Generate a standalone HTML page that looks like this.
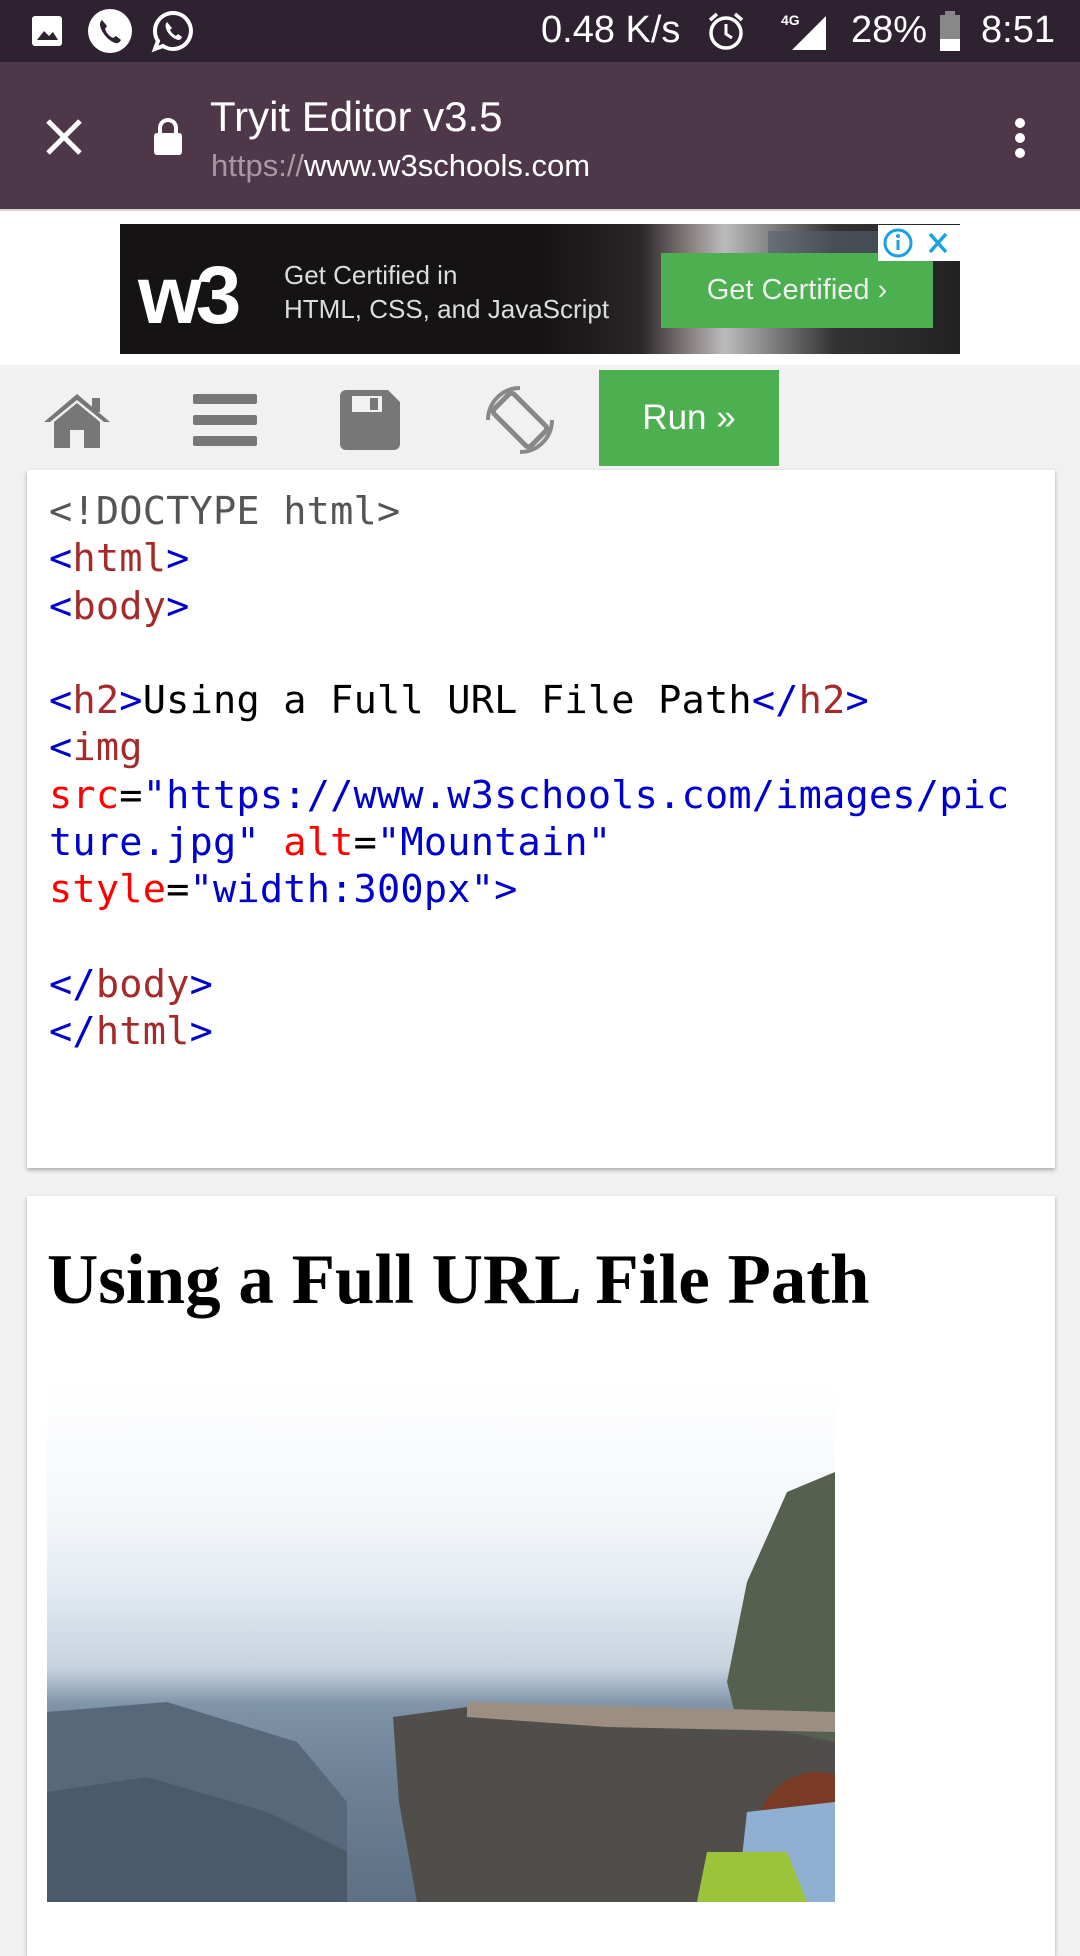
<!DOCTYPE html>
<html><head><meta charset="utf-8"><style>
*{margin:0;padding:0;box-sizing:border-box}
body{width:1080px;height:1920px;overflow:hidden;background:#f1f1f1;font-family:"Liberation Sans",sans-serif;position:relative}
.abs{position:absolute}
#sb{left:0;top:0;width:1080px;height:62px;background:#2e2230;color:#fff}
#hd{left:0;top:62px;width:1080px;height:147px;background:#4d3749;color:#fff}
#ad{left:0;top:211px;width:1080px;height:154px;background:#fff}
#code{left:27px;top:470px;width:1028px;height:698px;background:#fff;box-shadow:0 2px 4px rgba(0,0,0,.3)}
#code pre{position:absolute;left:22px;top:18px;font-family:"DejaVu Sans Mono","Liberation Mono",monospace;font-size:38.6px;line-height:47.3px;color:#000;letter-spacing:0.2px}
.b{color:#0000cd}.t{color:#a52a2a}.a{color:#f00}.d{color:#555}
#res{left:27px;top:1196px;width:1028px;height:760px;background:#fff;box-shadow:0 2px 4px rgba(0,0,0,.3);overflow:hidden}
</style></head><body>
<div id="sb" class="abs">
 <svg class="abs" style="left:30px;top:14px" width="34" height="34" viewBox="0 0 34 34"><rect x="2" y="2" width="30" height="30" rx="3" fill="#fff"/><path d="M7 26 L14 17 L19 22 L23 18 L28 26Z" fill="#2e2230"/></svg>
 <svg class="abs" style="left:87px;top:8px" width="46" height="46" viewBox="0 0 46 46"><circle cx="23" cy="23" r="22" fill="#fff"/><path d="M15 12 q-4 3 0 11 q5 9 13 12 q4 1 6-3 l-5-4 -3 2 q-6-3 -8-9 l2-3z" fill="#2e2230"/></svg>
 <svg class="abs" style="left:151px;top:9px" width="44" height="44" viewBox="0 0 44 44"><path d="M22 4 a18 18 0 1 1 -10 33 l-8 3 3-8 A18 18 0 0 1 22 4z" fill="none" stroke="#fff" stroke-width="4"/><path d="M16 13 q-3 3 0 9 q4 7 11 9 q3 0 4-3 l-4-3 -2 2 q-4-2 -6-6 l2-2z" fill="#fff"/></svg>
 <div class="abs" style="left:541px;top:9px;font-size:38px">0.48 K/s</div>
 <svg class="abs" style="left:706px;top:10px" width="40" height="42" viewBox="0 0 40 42"><circle cx="20" cy="23" r="15" fill="none" stroke="#fff" stroke-width="3.5"/><path d="M20 14v10l6 4" stroke="#fff" stroke-width="3" fill="none"/><path d="M4 10l7-6M36 10l-7-6" stroke="#fff" stroke-width="3.5"/></svg>
 <div class="abs" style="left:781px;top:12px;font-size:14px;font-weight:bold">4G</div>
 <svg class="abs" style="left:790px;top:12px" width="40" height="40"><path d="M2 38 L36 4 V38Z" fill="#fff"/></svg>
 <div class="abs" style="left:851px;top:9px;font-size:38px">28%</div>
 <svg class="abs" style="left:938px;top:11px" width="24" height="40"><rect x="7" y="0" width="10" height="4" fill="#888"/><rect x="2" y="4" width="20" height="36" fill="#888"/><rect x="2" y="28" width="20" height="12" fill="#fff"/></svg>
 <div class="abs" style="left:981px;top:9px;font-size:38px">8:51</div>
</div>
<div id="hd" class="abs">
 <svg class="abs" style="left:44px;top:55px" width="40" height="40"><path d="M4 4L36 36M36 4L4 36" stroke="#fff" stroke-width="5"/></svg>
 <svg class="abs" style="left:152px;top:54px" width="32" height="42"><path d="M8 18v-6a8 8 0 0 1 16 0v6" stroke="#fff" stroke-width="4" fill="none"/><rect x="2" y="17" width="28" height="22" rx="3" fill="#fff"/></svg>
 <div class="abs" style="left:210px;top:31px;font-size:42px">Tryit Editor v3.5</div>
 <div class="abs" style="left:211px;top:86px;font-size:31px"><span style="color:#a898a4">https://</span>www.w3schools.com</div>
 <svg class="abs" style="left:1009px;top:54px" width="22" height="44"><circle cx="11" cy="7" r="5" fill="#fff"/><circle cx="11" cy="22" r="5" fill="#fff"/><circle cx="11" cy="37" r="5" fill="#fff"/></svg>
</div>
<div class="abs" style="left:0;top:209px;width:1080px;height:2px;background:#d8d8d8"></div>
<div id="ad" class="abs">
 <div class="abs" style="left:120px;top:13px;width:840px;height:130px;background:linear-gradient(90deg,#151313 0%,#151313 50%,#2a2628 62%,#8a8282 68%,#bbb 72%,#333 85%,#222 100%)"></div>
 <div class="abs" style="left:768px;top:20px;width:180px;height:30px;background:#556070;opacity:.6"></div>
 <div class="abs" style="left:138px;top:38px;font-size:82px;font-weight:bold;color:#fff;font-family:'Liberation Sans',sans-serif;letter-spacing:-6px">w3</div>
 <div class="abs" style="left:284px;top:47px;font-size:26px;color:#ddd;line-height:34px">Get Certified in<br>HTML, CSS, and JavaScript</div>
 <div class="abs" style="left:661px;top:42px;width:272px;height:75px;background:#4caf50;color:#eee;font-size:29px;line-height:75px;text-align:center">Get Certified ›</div>
 <div class="abs" style="left:878px;top:14px;width:82px;height:36px;background:#fff"></div>
 <svg class="abs" style="left:882px;top:16px" width="80" height="32"><circle cx="16" cy="16" r="13" fill="none" stroke="#1ba1e2" stroke-width="3"/><rect x="14.5" y="13" width="3" height="10" fill="#1ba1e2"/><circle cx="16" cy="9" r="2" fill="#1ba1e2"/><path d="M48 7L64 25M64 7L48 25" stroke="#1ba1e2" stroke-width="3.5"/></svg>
</div>
<svg class="abs" style="left:42px;top:392px" width="70" height="56" viewBox="0 0 70 56"><path d="M35 2 L2 30 L8 30 L35 8 L62 30 L68 30Z" fill="#777"/><path d="M12 30 L35 11 L58 30 V56 H42 V38 H28 V56 H12Z" fill="#777"/><rect x="50" y="6" width="8" height="14" fill="#777"/></svg>
<svg class="abs" style="left:193px;top:394px" width="64" height="52"><rect y="0" width="64" height="10" rx="2" fill="#777"/><rect y="21" width="64" height="10" rx="2" fill="#777"/><rect y="42" width="64" height="10" rx="2" fill="#777"/></svg>
<svg class="abs" style="left:340px;top:390px" width="60" height="60" viewBox="0 0 60 60"><path d="M6 0 H48 L60 12 V54 a6 6 0 0 1 -6 6 H6 a6 6 0 0 1 -6 -6 V6 a6 6 0 0 1 6 -6Z" fill="#777"/><rect x="12" y="6" width="30" height="16" fill="#f1f1f1"/><rect x="30" y="8" width="8" height="12" fill="#777"/></svg>
<svg class="abs" style="left:482px;top:382px" width="76" height="76" viewBox="0 0 76 76"><g transform="rotate(-45 38 38)"><rect x="24" y="12" width="28" height="52" rx="4" fill="none" stroke="#888" stroke-width="5"/></g><path d="M6 38 a32 32 0 0 1 32 -32" fill="none" stroke="#888" stroke-width="4"/><path d="M70 38 a32 32 0 0 1 -32 32" fill="none" stroke="#888" stroke-width="4"/></svg>
<div class="abs" style="left:599px;top:370px;width:180px;height:96px;background:#4caf50;color:#fff;font-size:35px;line-height:96px;text-align:center">Run »</div>
<div id="code" class="abs"><pre><span class="d">&lt;!DOCTYPE html&gt;</span>
<span class="b">&lt;</span><span class="t">html</span><span class="b">&gt;</span>
<span class="b">&lt;</span><span class="t">body</span><span class="b">&gt;</span>

<span class="b">&lt;</span><span class="t">h2</span><span class="b">&gt;</span>Using a Full URL File Path<span class="b">&lt;/</span><span class="t">h2</span><span class="b">&gt;</span>
<span class="b">&lt;</span><span class="t">img</span>
<span class="a">src</span>=<span class="b">"https://www.w3schools.com/images/pic
ture.jpg"</span> <span class="a">alt</span>=<span class="b">"Mountain"</span>
<span class="a">style</span>=<span class="b">"width:300px"</span><span class="b">&gt;</span>

<span class="b">&lt;/</span><span class="t">body</span><span class="b">&gt;</span>
<span class="b">&lt;/</span><span class="t">html</span><span class="b">&gt;</span></pre></div>
<div id="res" class="abs">
 <div class="abs" style="left:20px;top:44px;font-family:'Liberation Serif',serif;font-weight:bold;font-size:71px;white-space:nowrap">Using a Full URL File Path</div>
 <div class="abs" style="left:20px;top:186px;width:788px;height:520px;overflow:hidden;background:linear-gradient(180deg,#fff 0%,#f4f7fa 25%,#e3eaf1 40%,#c6d2de 55%,#7f94a9 62%,#6f8398 75%,#5d7086 100%)">
  <svg width="788" height="520" viewBox="0 0 788 520" style="position:absolute;left:0;top:0">
   <path d="M0 330 L120 320 L250 360 L300 420 L300 520 L0 520Z" fill="#57687a"/>
   <path d="M0 410 L100 395 L220 430 L300 470 L300 520 L0 520Z" fill="#4a5a6a"/>
   <path d="M346 335 L420 325 L560 335 L640 340 L788 350 L788 520 L370 520 L352 420Z" fill="#4f4e4a"/>
   <path d="M700 200 L740 110 L788 90 L788 360 L690 340 L680 300Z" fill="#55604e"/>
   <path d="M420 320 L788 330 L788 350 L560 345 L420 335Z" fill="#9c8e80"/>
   <circle cx="770" cy="450" r="60" fill="#7a3a25"/>
   <path d="M690 520 L700 430 L788 420 L788 520Z" fill="#8fb0d0"/>
   <path d="M650 520 L660 470 L740 470 L760 520Z" fill="#9cc43a"/>
  </svg>
 </div>
</div>
</body></html>
